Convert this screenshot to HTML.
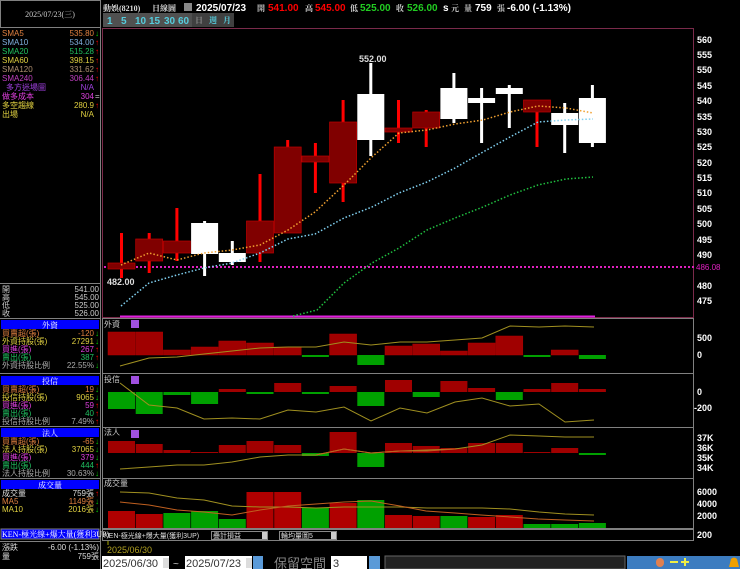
<!DOCTYPE html>
<html><head><meta charset="utf-8"><style>
body{margin:0;background:#000;width:740px;height:569px;overflow:hidden}
svg{display:block}
text{font-family:"Liberation Sans","Noto Sans CJK TC",sans-serif}
.s{font-family:"Liberation Serif","Noto Serif CJK SC","Noto Sans CJK TC",serif;font-size:8px}
.ax{font-size:9px;font-weight:bold;fill:#fff}
</style></head><body>
<svg width="740" height="569" viewBox="0 0 740 569" xmlns="http://www.w3.org/2000/svg">
<rect width="740" height="569" fill="#000"/>
<!-- left panel -->
<rect x="0.5" y="0.5" width="100" height="27" fill="#000" stroke="#808080"/>
<text x="50" y="17" class="s" fill="#ccc" text-anchor="middle">2025/07/23(三)</text>
<line x1="100.5" y1="28" x2="100.5" y2="569" stroke="#808080"/>
<g class="s">
<text x="2" y="36" fill="#e08040">SMA5</text><text x="94" y="36" fill="#e08040" text-anchor="end">535.80</text><text x="95" y="36" fill="#0c0">↓</text>
<text x="2" y="45" fill="#80b0e0">SMA10</text><text x="94" y="45" fill="#80b0e0" text-anchor="end">534.00</text><text x="95" y="45" fill="#f00">↑</text>
<text x="2" y="54" fill="#20c060">SMA20</text><text x="94" y="54" fill="#20c060" text-anchor="end">515.28</text><text x="95" y="54" fill="#f00">↑</text>
<text x="2" y="63" fill="#e0d040">SMA60</text><text x="94" y="63" fill="#e0d040" text-anchor="end">398.15</text><text x="95" y="63" fill="#f00">↑</text>
<text x="2" y="72" fill="#b09070">SMA120</text><text x="94" y="72" fill="#b09070" text-anchor="end">331.62</text><text x="95" y="72" fill="#f00">↑</text>
<text x="2" y="81" fill="#c040c0">SMA240</text><text x="94" y="81" fill="#c040c0" text-anchor="end">306.44</text><text x="95" y="81" fill="#f00">↑</text>
<text x="6" y="90" fill="#a040e0">多方迷場圖</text><text x="94" y="90" fill="#a040e0" text-anchor="end">N/A</text>
<text x="2" y="99" fill="#e040e0">做多成本</text><text x="94" y="99" fill="#e040e0" text-anchor="end">304</text><text x="95" y="99" fill="#ccc">=</text>
<text x="2" y="108" fill="#e0d040">多空趨線</text><text x="94" y="108" fill="#e0d040" text-anchor="end">280.9</text><text x="95" y="108" fill="#f00">↑</text>
<text x="2" y="117" fill="#e0d040">出場</text><text x="94" y="117" fill="#e0d040" text-anchor="end">N/A</text>
</g>
<line x1="0" y1="283.5" x2="100" y2="283.5" stroke="#808080"/>
<g class="s" fill="#ccc">
<text x="2" y="292">開</text><text x="99" y="292" text-anchor="end">541.00</text>
<text x="2" y="300">高</text><text x="99" y="300" text-anchor="end">545.00</text>
<text x="2" y="308">低</text><text x="99" y="308" text-anchor="end">525.00</text>
<text x="2" y="316">收</text><text x="99" y="316" text-anchor="end">526.00</text>
</g>
<line x1="0" y1="318.5" x2="100" y2="318.5" stroke="#808080"/>
<rect x="1" y="320" width="98" height="9" fill="#0000ff"/><text x="50" y="328" class="s" fill="#fff" text-anchor="middle">外資</text>
<g class="s">
<text x="2" y="336" fill="#e08040">買賣超(張)</text><text x="94" y="336" fill="#e08040" text-anchor="end">-120</text><text x="95" y="336" fill="#0c0">↓</text>
<text x="2" y="344" fill="#e0d040">外資持股(張)</text><text x="94" y="344" fill="#e0d040" text-anchor="end">27291</text><text x="95" y="344" fill="#0c0">↓</text>
<text x="2" y="352" fill="#e040e0">買進(張)</text><text x="94" y="352" fill="#e040e0" text-anchor="end">267</text><text x="95" y="352" fill="#f00">↑</text>
<text x="2" y="360" fill="#20c060">賣出(張)</text><text x="94" y="360" fill="#20c060" text-anchor="end">387</text><text x="95" y="360" fill="#f00">↑</text>
<text x="2" y="368" fill="#aaa">外資持股比例</text><text x="94" y="368" fill="#aaa" text-anchor="end">22.55%</text><text x="95" y="368" fill="#0c0">↓</text>
</g>
<line x1="0" y1="373.5" x2="100" y2="373.5" stroke="#808080"/>
<rect x="1" y="376" width="98" height="9" fill="#0000ff"/><text x="50" y="384" class="s" fill="#fff" text-anchor="middle">投信</text>
<g class="s">
<text x="2" y="392" fill="#e08040">買賣超(張)</text><text x="94" y="392" fill="#e08040" text-anchor="end">19</text><text x="95" y="392" fill="#0c0">↓</text>
<text x="2" y="400" fill="#e0d040">投信持股(張)</text><text x="94" y="400" fill="#e0d040" text-anchor="end">9065</text><text x="95" y="400" fill="#0c0">↓</text>
<text x="2" y="408" fill="#e040e0">買進(張)</text><text x="94" y="408" fill="#e040e0" text-anchor="end">59</text><text x="95" y="408" fill="#f00">↑</text>
<text x="2" y="416" fill="#20c060">賣出(張)</text><text x="94" y="416" fill="#20c060" text-anchor="end">40</text><text x="95" y="416" fill="#f00">↑</text>
<text x="2" y="424" fill="#aaa">投信持股比例</text><text x="94" y="424" fill="#aaa" text-anchor="end">7.49%</text><text x="95" y="424" fill="#f00">↑</text>
</g>
<line x1="0" y1="426.5" x2="100" y2="426.5" stroke="#808080"/>
<rect x="1" y="428" width="98" height="9" fill="#0000ff"/><text x="50" y="436" class="s" fill="#fff" text-anchor="middle">法人</text>
<g class="s">
<text x="2" y="444" fill="#e08040">買賣超(張)</text><text x="94" y="444" fill="#e08040" text-anchor="end">-65</text><text x="95" y="444" fill="#0c0">↓</text>
<text x="2" y="452" fill="#e0d040">法人持股(張)</text><text x="94" y="452" fill="#e0d040" text-anchor="end">37065</text><text x="95" y="452" fill="#0c0">↓</text>
<text x="2" y="460" fill="#e040e0">買進(張)</text><text x="94" y="460" fill="#e040e0" text-anchor="end">379</text><text x="95" y="460" fill="#0c0">↓</text>
<text x="2" y="468" fill="#20c060">賣出(張)</text><text x="94" y="468" fill="#20c060" text-anchor="end">444</text><text x="95" y="468" fill="#f00">↑</text>
<text x="2" y="476" fill="#aaa">法人持股比例</text><text x="94" y="476" fill="#aaa" text-anchor="end">30.63%</text><text x="95" y="476" fill="#0c0">↓</text>
</g>
<line x1="0" y1="478.5" x2="100" y2="478.5" stroke="#808080"/>
<rect x="1" y="480" width="98" height="9" fill="#0000ff"/><text x="50" y="488" class="s" fill="#fff" text-anchor="middle">成交量</text>
<g class="s">
<text x="2" y="496" fill="#ddd">成交量</text><text x="94" y="496" fill="#ddd" text-anchor="end">759張</text><text x="95" y="496" fill="#f00">↑</text>
<text x="2" y="504" fill="#e08040">MA5</text><text x="94" y="504" fill="#e08040" text-anchor="end">1149張</text><text x="95" y="504" fill="#0c0">↓</text>
<text x="2" y="512" fill="#e0d040">MA10</text><text x="94" y="512" fill="#e0d040" text-anchor="end">2016張</text><text x="95" y="512" fill="#0c0">↓</text>
</g>
<rect x="1" y="529" width="98" height="10" fill="#0000ff" stroke="#808080"/><text x="2" y="537" class="s" fill="#fff">KEN-極光線+爆大量(獲利3UP)</text>
<line x1="0" y1="541.5" x2="100" y2="541.5" stroke="#808080"/>
<g class="s" fill="#ddd">
<text x="2" y="550">漲跌</text><text x="99" y="550" text-anchor="end">-6.00 (-1.13%)</text>
<text x="2" y="559">量</text><text x="99" y="559" text-anchor="end">759張</text>
</g>

<!-- top bar -->
<g font-size="10" font-weight="bold">
<text x="103" y="11" class="s" fill="#ddd">動娛(8210)</text>
<text x="152" y="11" class="s" fill="#ddd">日線圖</text>
<rect x="184" y="3" width="8" height="8" fill="#888"/>
<text x="196" y="11" fill="#fff">2025/07/23</text>
<text x="257" y="11" class="s" fill="#ccc">開</text><text x="268" y="11" fill="#f00">541.00</text>
<text x="305" y="11" class="s" fill="#ccc">高</text><text x="315" y="11" fill="#f00">545.00</text>
<text x="350" y="11" class="s" fill="#ccc">低</text><text x="360" y="11" fill="#2c2">525.00</text>
<text x="396" y="11" class="s" fill="#ccc">收</text><text x="407" y="11" fill="#2c2">526.00</text>
<text x="443" y="11" fill="#fff">s</text><text x="451" y="11" class="s" fill="#ccc">元</text>
<text x="464" y="11" class="s" fill="#ccc">量</text><text x="475" y="11" fill="#fff">759</text>
<text x="497" y="11" class="s" fill="#ccc">張</text><text x="507" y="11" fill="#fff">-6.00 (-1.13%)</text>
</g>
<g font-size="10" font-weight="bold" fill="#5cd">
<rect x="103" y="13" width="89" height="14" fill="#505050"/>
<rect x="192" y="13" width="42" height="14" fill="#404040"/>
<text x="107" y="24">1</text><text x="121" y="24">5</text><text x="135" y="24">10</text><text x="149" y="24">15</text><text x="164" y="24">30</text><text x="178" y="24">60</text>
<text x="195" y="23" class="s" fill="#888">日</text><text x="209" y="23" class="s" fill="#5cd">週</text><text x="223" y="23" class="s" fill="#5cd">月</text>
</g>

<!-- panel frames -->
<g fill="none" stroke="#7a2a4a">
<rect x="102.5" y="28.5" width="591" height="289"/>
</g>
<g fill="none" stroke="#808080">
<rect x="102.5" y="318.5" width="591" height="55"/>
<rect x="102.5" y="373.5" width="591" height="54"/>
<rect x="102.5" y="427.5" width="591" height="51"/>
<rect x="102.5" y="478.5" width="591" height="50"/>
<rect x="102.5" y="529.5" width="591" height="11"/>
</g>

<!-- axis labels -->
<g class="ax">
<text x="697" y="43">560</text><text x="697" y="58">555</text><text x="697" y="73">550</text><text x="697" y="89">545</text>
<text x="697" y="104">540</text><text x="697" y="120">535</text><text x="697" y="135">530</text><text x="697" y="150">525</text>
<text x="697" y="166">520</text><text x="697" y="181">515</text><text x="697" y="196">510</text><text x="697" y="212">505</text>
<text x="697" y="227">500</text><text x="697" y="243">495</text><text x="697" y="258">490</text><text x="697" y="289">480</text>
<text x="697" y="304">475</text>
<text x="697" y="341">500</text><text x="697" y="358">0</text>
<text x="697" y="395">0</text><text x="694" y="411">-200</text>
<text x="697" y="441">37K</text><text x="697" y="451">36K</text><text x="697" y="461">35K</text><text x="697" y="471">34K</text>
<text x="697" y="495">6000</text><text x="697" y="507">4000</text><text x="697" y="519">2000</text>
<text x="697" y="538">200</text>
</g>
<text x="696" y="270" font-size="8" fill="#e020c0">486.08</text>

<!-- reference lines -->
<line x1="104" y1="267" x2="694" y2="267" stroke="#e020c0" stroke-width="2" stroke-dasharray="2,2"/>
<line x1="120" y1="316.5" x2="595" y2="316.5" stroke="#e020e0" stroke-width="2"/>

<!-- candles -->
<g id="c">
<rect x="120" y="233" width="3" height="45" fill="#f00"/><rect x="108" y="263" width="27" height="6" fill="#800000" stroke="#c00000" stroke-width=".7"/>
<rect x="147.7" y="233" width="3" height="40" fill="#f00"/><rect x="135.7" y="239" width="27" height="22" fill="#800000" stroke="#c00000" stroke-width=".7"/>
<rect x="175.4" y="208" width="3" height="53" fill="#f00"/><rect x="163.4" y="241" width="27" height="12" fill="#800000" stroke="#c00000" stroke-width=".7"/>
<rect x="203.1" y="221" width="3" height="55" fill="#fff"/><rect x="191.1" y="223" width="27" height="31" fill="#fff"/>
<rect x="230.8" y="241" width="3" height="24" fill="#fff"/><rect x="218.8" y="253" width="27" height="9" fill="#fff"/>
<rect x="258.5" y="174" width="3" height="88" fill="#f00"/><rect x="246.5" y="221" width="27" height="32" fill="#800000" stroke="#c00000" stroke-width=".7"/>
<rect x="286.2" y="140" width="3" height="93" fill="#f00"/><rect x="274.2" y="147" width="27" height="86" fill="#800000" stroke="#c00000" stroke-width=".7"/>
<rect x="313.9" y="143" width="3" height="50" fill="#f00"/><rect x="301.9" y="156" width="27" height="6" fill="#800000" stroke="#c00000" stroke-width=".7"/>
<rect x="341.6" y="100" width="3" height="102" fill="#f00"/><rect x="329.6" y="122" width="27" height="61" fill="#800000" stroke="#c00000" stroke-width=".7"/>
<rect x="369.3" y="63" width="3" height="93" fill="#fff"/><rect x="357.3" y="94" width="27" height="46" fill="#fff"/>
<rect x="397" y="100" width="3" height="43" fill="#f00"/><rect x="385" y="128" width="27" height="4" fill="#800000" stroke="#c00000" stroke-width=".7"/>
<rect x="424.7" y="110" width="3" height="37" fill="#f00"/><rect x="412.7" y="112" width="27" height="16" fill="#800000" stroke="#c00000" stroke-width=".7"/>
<rect x="452.4" y="73" width="3" height="50" fill="#fff"/><rect x="440.4" y="88" width="27" height="31" fill="#fff"/>
<rect x="480.1" y="88" width="3" height="55" fill="#fff"/><rect x="468.1" y="98" width="27" height="5" fill="#fff"/>
<rect x="507.8" y="85" width="3" height="43" fill="#fff"/><rect x="495.8" y="88" width="27" height="6" fill="#fff"/>
<rect x="535.5" y="100" width="3" height="47" fill="#f00"/><rect x="523.5" y="100" width="27" height="12" fill="#800000" stroke="#c00000" stroke-width=".7"/>
<rect x="563.2" y="103" width="3" height="50" fill="#fff"/><rect x="551.2" y="113" width="27" height="12" fill="#fff"/>
<rect x="590.9" y="85" width="3" height="62" fill="#fff"/><rect x="578.9" y="98" width="27" height="45" fill="#fff"/>
</g>
<text x="359" y="62" font-size="9" font-weight="bold" fill="#ddd">552.00</text>
<text x="107" y="285" font-size="9" font-weight="bold" fill="#ddd">482.00</text>

<!-- MAs -->
<g fill="none" stroke-width="1.5" stroke-dasharray="1.5,2">
<polyline stroke="#f0a030" points="121,265 149,253 177,260 204,253 232,250 260,245 288,230 315,212 344,185 372,157 399,133 427,130 455,124 483,120 510,112 538,106 566,108 593,113"/>
<polyline stroke="#80d0f0" points="121,306 149,283 177,275 204,268 232,263 260,253 288,239 315,234 344,218 372,207 399,193 427,182 455,168 483,152 510,137 538,122 566,120 593,119"/>
<polyline stroke="#20c040" points="293,316 317,310 344,283 372,263 399,248 427,230 455,218 483,207 510,195 538,185 566,179 593,177"/>
</g>

<!-- panel labels -->
<g class="s" fill="#ccc">
<text x="104" y="327">外資</text><text x="104" y="382">投信</text><text x="104" y="435">法人</text><text x="104" y="486">成交量</text>
</g>
<g fill="#a050e0"><rect x="131" y="320" width="8" height="8"/><rect x="131" y="376" width="8" height="8"/><rect x="131" y="430" width="8" height="8"/></g>

<!-- panel 1 bars -->
<g fill="#a00000" stroke="#b00000" stroke-width=".5">
<rect x="108" y="332" width="27" height="23"/><rect x="135.7" y="332" width="27" height="23"/><rect x="163.4" y="350" width="27" height="5"/>
<rect x="191.1" y="347" width="27" height="8"/><rect x="218.8" y="341" width="27" height="14"/><rect x="246.5" y="343" width="27" height="12"/>
<rect x="274.2" y="347" width="27" height="8"/><rect x="329.6" y="334" width="27" height="21"/><rect x="385" y="346" width="27" height="9"/>
<rect x="412.7" y="344" width="27" height="11"/><rect x="440.4" y="351" width="27" height="4"/><rect x="468.1" y="343" width="27" height="12"/>
<rect x="495.8" y="336" width="27" height="19"/><rect x="551.2" y="350" width="27" height="5"/>
</g>
<g fill="#00a000">
<rect x="301.9" y="355" width="27" height="2"/><rect x="357.3" y="355" width="27" height="10"/><rect x="523.5" y="355" width="27" height="2"/><rect x="578.9" y="355" width="27" height="4"/>
</g>
<polyline fill="none" stroke="#a09020" points="120,366 149,358 177,357 204,354 232,351 260,348 288,347 316,347 344,342 371,345 400,342 427,342 455,340 482,338 510,326 539,327 565,326 594,327"/>
<!-- panel 2 -->
<g fill="#a00000">
<rect x="218.8" y="389" width="27" height="3"/><rect x="274.2" y="383" width="27" height="9"/><rect x="329.6" y="386" width="27" height="6"/>
<rect x="385" y="380" width="27" height="12"/><rect x="440.4" y="381" width="27" height="11"/><rect x="468.1" y="388" width="27" height="4"/>
<rect x="523.5" y="389" width="27" height="3"/><rect x="551.2" y="383" width="27" height="9"/><rect x="578.9" y="389" width="27" height="3"/>
</g>
<g fill="#00a000">
<rect x="108" y="392" width="27" height="17"/><rect x="135.7" y="392" width="27" height="22"/><rect x="163.4" y="392" width="27" height="3"/>
<rect x="191.1" y="392" width="27" height="12"/><rect x="246.5" y="392" width="27" height="2"/><rect x="301.9" y="392" width="27" height="2"/>
<rect x="357.3" y="392" width="27" height="14"/><rect x="412.7" y="392" width="27" height="5"/><rect x="495.8" y="392" width="27" height="8"/>
</g>
<polyline fill="none" stroke="#a09020" points="120,383 149,405 177,408 204,419 232,418 260,419 288,410 316,412 344,407 371,421 400,408 427,413 455,402 482,398 510,406 539,404 565,422 594,420"/>
<!-- panel 3 -->
<g fill="#a00000">
<rect x="108" y="441" width="27" height="12"/><rect x="135.7" y="444" width="27" height="9"/><rect x="163.4" y="450" width="27" height="3"/>
<rect x="191.1" y="452" width="27" height="1"/><rect x="218.8" y="445" width="27" height="8"/><rect x="246.5" y="441" width="27" height="12"/>
<rect x="274.2" y="445" width="27" height="8"/><rect x="329.6" y="432" width="27" height="21"/><rect x="385" y="443" width="27" height="10"/>
<rect x="412.7" y="446" width="27" height="7"/><rect x="440.4" y="448" width="27" height="5"/><rect x="468.1" y="443" width="27" height="10"/>
<rect x="495.8" y="443" width="27" height="10"/><rect x="523.5" y="452" width="27" height="1"/><rect x="551.2" y="448" width="27" height="5"/>
</g>
<g fill="#00a000">
<rect x="301.9" y="453" width="27" height="3"/><rect x="357.3" y="453" width="27" height="14"/><rect x="578.9" y="453" width="27" height="2"/>
</g>
<polyline fill="none" stroke="#a09020" points="120,469 149,467 177,465 204,465 232,462 260,457 288,455 316,455 344,449 371,453 400,451 427,450 455,449 482,445 510,435 539,436 565,437 594,437"/>
<polyline fill="none" stroke="#c06020" points="316,455 344,449 371,453 400,451 427,451 455,449"/>
<!-- panel 4 volume -->
<g fill="#b00000">
<rect x="108" y="511" width="27" height="17"/><rect x="135.7" y="514" width="27" height="14"/><rect x="246.5" y="492" width="27" height="36"/>
<rect x="274.2" y="492" width="27" height="36"/><rect x="329.6" y="503" width="27" height="25"/><rect x="385" y="515" width="27" height="13"/>
<rect x="412.7" y="516" width="27" height="12"/><rect x="468.1" y="517" width="27" height="11"/><rect x="495.8" y="515" width="27" height="13"/>
</g>
<g fill="#00a000">
<rect x="163.4" y="513" width="27" height="15"/><rect x="191.1" y="511" width="27" height="17"/><rect x="218.8" y="519" width="27" height="9"/>
<rect x="301.9" y="508" width="27" height="20"/><rect x="357.3" y="500" width="27" height="28"/><rect x="440.4" y="516" width="27" height="12"/>
<rect x="523.5" y="524" width="27" height="4"/><rect x="551.2" y="524" width="27" height="4"/><rect x="578.9" y="523" width="27" height="5"/>
</g>
<polyline fill="none" stroke="#a09020" points="120,492 149,493 177,498 204,500 232,506 260,507 288,507 316,508 344,507 371,507 400,507 427,508 455,508 482,508 510,509 539,512 565,514 594,515"/>
<polyline fill="none" stroke="#c06020" points="120,502 149,505 177,510 204,512 232,515 260,510 288,506 316,504 344,502 371,501 400,506 426,511 455,513 481,515 510,517 538,519 565,520 594,521"/>

<!-- bottom bar controls -->
<g class="s" fill="#ddd">
<text x="104" y="538" font-size="7">KEN-極光線+爆大量(獲利3UP)</text>
<rect x="211.5" y="531.5" width="56" height="8" fill="none" stroke="#888"/><text x="213" y="538" font-size="7">疊計損益</text>
<rect x="262" y="532" width="5" height="7" fill="#ccc"/>
<rect x="279.5" y="531.5" width="57" height="8" fill="none" stroke="#888"/><text x="281" y="538" font-size="7">輪均量圖5</text>
<rect x="331" y="532" width="5" height="7" fill="#ccc"/>
</g>
<line x1="108" y1="541" x2="108" y2="545" stroke="#aa0"/>
<text x="107" y="553" font-size="9" fill="#b0a020">2025/06/30</text>
<!-- bottom row -->
<rect x="102" y="556" width="67" height="13" fill="#fff"/><text x="103" y="567" font-size="11" fill="#333">2025/06/30</text>
<rect x="163" y="558" width="6" height="10" fill="#ddd"/>
<text x="173" y="567" font-size="10" fill="#ccc">~</text>
<rect x="185" y="556" width="67" height="13" fill="#fff"/><text x="186" y="567" font-size="11" fill="#333">2025/07/23</text>
<rect x="246" y="558" width="6" height="10" fill="#ddd"/>
<rect x="253" y="556" width="10" height="13" fill="#5a9ad8"/>
<text x="274" y="568" font-size="13" fill="#888" font-family="Noto Sans CJK TC,sans-serif">保留空間</text>
<rect x="331" y="556" width="36" height="13" fill="#fff"/><text x="333" y="567" font-size="11" fill="#333">3</text>
<rect x="369" y="556" width="11" height="13" fill="#5a9ad8"/>
<rect x="385" y="556" width="240" height="13" fill="#222" stroke="#666"/>
<rect x="627" y="556" width="113" height="13" fill="#3c7cc0"/>
<rect x="656" y="558" width="8" height="9" rx="4" fill="#e08050"/>
<rect x="670" y="561" width="8" height="2" fill="#ee4"/>
<rect x="681" y="561" width="8" height="2" fill="#ee4"/><rect x="684" y="558" width="2" height="8" fill="#ee4"/>
<path d="M729 567 L731 559 Q734 556 737 559 L739 567 Z" fill="#f0a000"/>
</svg>
</body></html>
